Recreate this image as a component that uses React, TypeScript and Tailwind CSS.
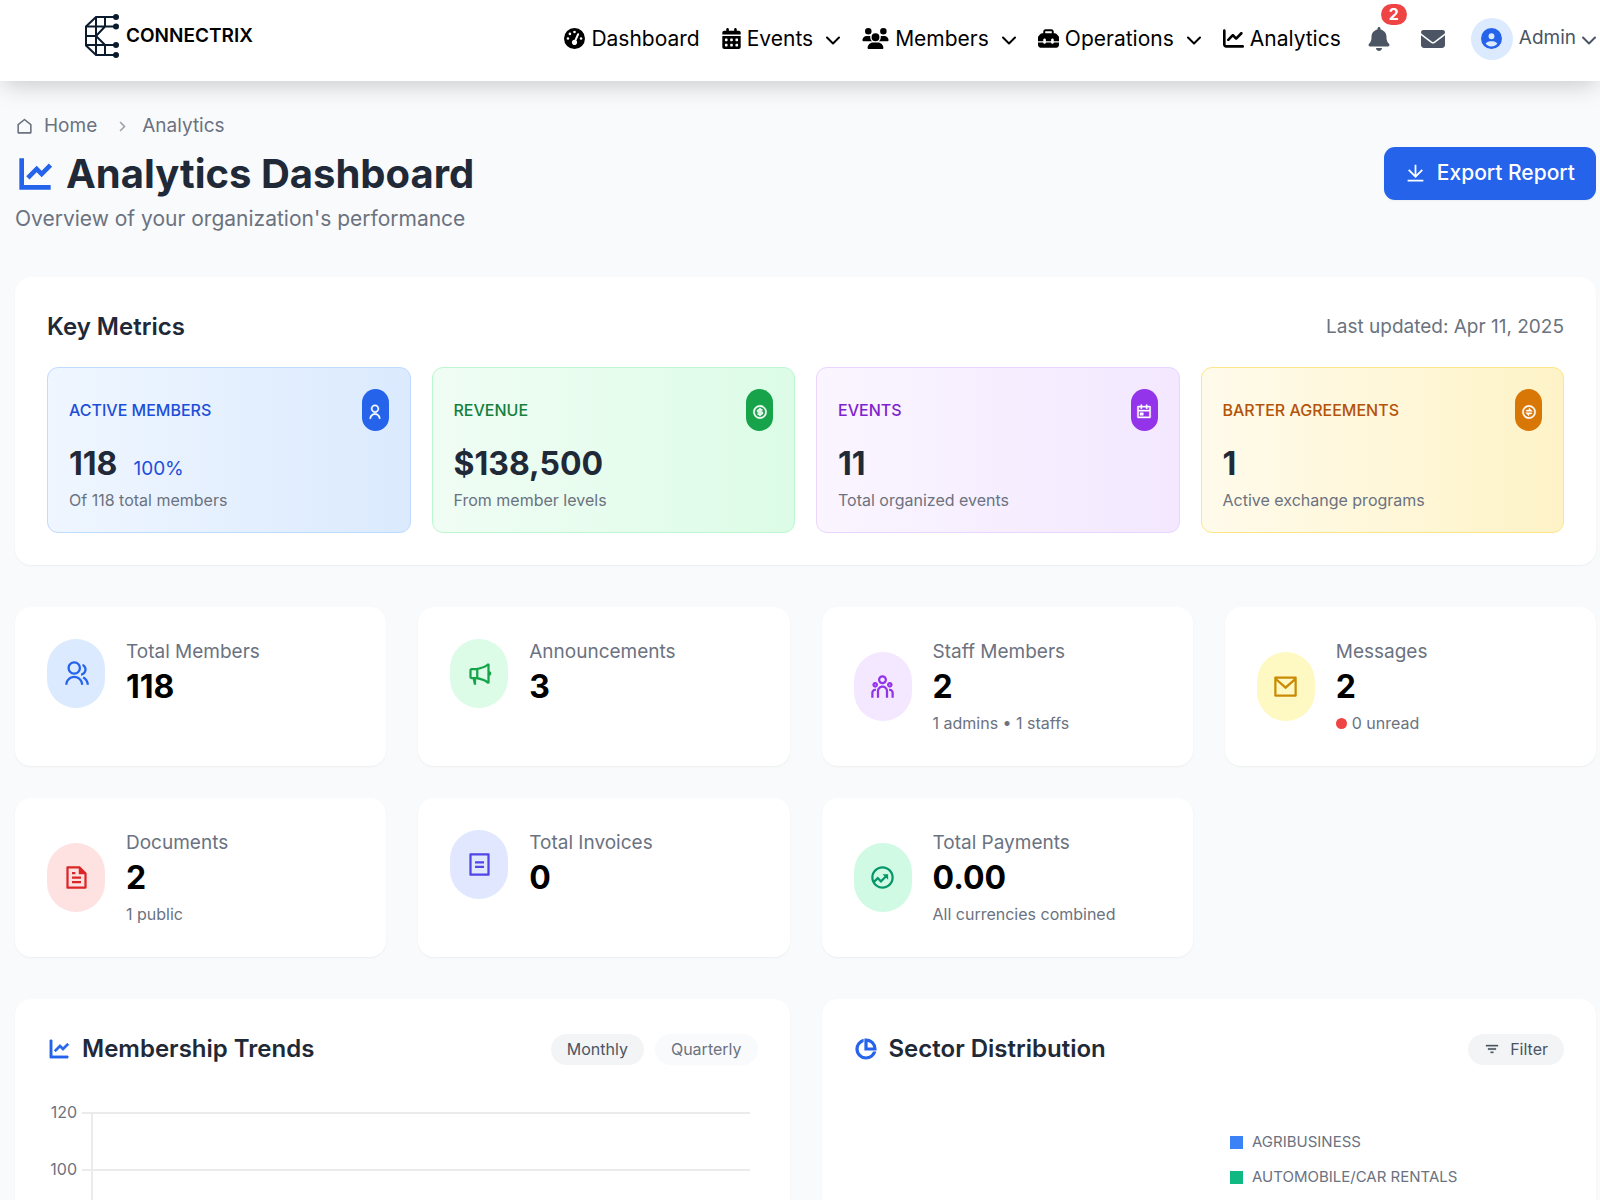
import { useState } from "react";
import type { IconType } from "react-icons";
import {
  FaBell,
  FaCalendarDays,
  FaChartLine,
  FaCircleUser,
  FaEnvelope,
  FaGaugeHigh,
  FaToolbox,
  FaUsers,
} from "react-icons/fa6";
import {
  RiArrowRightSLine,
  RiBillLine,
  RiCalendarEventLine,
  RiDownloadLine,
  RiExchangeLine,
  RiFileTextLine,
  RiFilter3Line,
  RiFundsLine,
  RiGroupLine,
  RiHomeLine,
  RiLineChartLine,
  RiMailLine,
  RiMegaphoneLine,
  RiMoneyDollarCircleLine,
  RiPieChartLine,
  RiTeamLine,
  RiUserLine,
} from "react-icons/ri";

type NavItem = { label: string; icon: IconType; size: string; menu?: boolean };

const navItems: NavItem[] = [
  { label: "Dashboard", icon: FaGaugeHigh, size: "w-[21px]" },
  { label: "Events", icon: FaCalendarDays, size: "w-[19px]", menu: true },
  { label: "Members", icon: FaUsers, size: "w-[27px]", menu: true },
  { label: "Operations", icon: FaToolbox, size: "w-[21px]", menu: true },
  { label: "Analytics", icon: FaChartLine, size: "w-[21px]" },
];

const metrics = [
  {
    label: "ACTIVE MEMBERS",
    value: "118",
    extra: "100%",
    note: "Of 118 total members",
    icon: RiUserLine,
    card: "from-[#eff6ff] to-[#dbeafe] border-[#bfdbfe]",
    text: "text-[#1d4ed8]",
    pill: "bg-[#2563eb]",
  },
  {
    label: "REVENUE",
    value: "$138,500",
    note: "From member levels",
    icon: RiMoneyDollarCircleLine,
    card: "from-[#f0fdf4] to-[#dcfce7] border-[#bbf7d0]",
    text: "text-[#15803d]",
    pill: "bg-[#16a34a]",
  },
  {
    label: "EVENTS",
    value: "11",
    note: "Total organized events",
    icon: RiCalendarEventLine,
    card: "from-[#faf5ff] to-[#f3e8ff] border-[#e9d5ff]",
    text: "text-[#7e22ce]",
    pill: "bg-[#9333ea]",
  },
  {
    label: "BARTER AGREEMENTS",
    value: "1",
    note: "Active exchange programs",
    icon: RiExchangeLine,
    card: "from-[#fffbeb] to-[#fef3c7] border-[#fde68a]",
    text: "text-[#b45309]",
    pill: "bg-[#d97706]",
  },
];

const stats = [
  { label: "Total Members", value: "118", icon: RiGroupLine, tone: "bg-[#dbeafe] text-[#2563eb]" },
  { label: "Announcements", value: "3", icon: RiMegaphoneLine, tone: "bg-[#dcfce7] text-[#16a34a]" },
  { label: "Staff Members", value: "2", note: "1 admins • 1 staffs", icon: RiTeamLine, tone: "bg-[#f3e8ff] text-[#9333ea]" },
  { label: "Messages", value: "2", note: "0 unread", dot: true, icon: RiMailLine, tone: "bg-[#fef9c3] text-[#ca8a04]" },
  { label: "Documents", value: "2", note: "1 public", icon: RiFileTextLine, tone: "bg-[#fee2e2] text-[#dc2626]" },
  { label: "Total Invoices", value: "0", icon: RiBillLine, tone: "bg-[#e0e7ff] text-[#4f46e5]" },
  { label: "Total Payments", value: "0.00", note: "All currencies combined", icon: RiFundsLine, tone: "bg-[#d1fae5] text-[#059669]" },
];

const sectors = [
  { name: "AGRIBUSINESS", color: "bg-[#3b82f6]" },
  { name: "AUTOMOBILE/CAR RENTALS", color: "bg-[#10b981]" },
];

const ticks = [120, 100];

const Chevron = () => (
  <svg width="14" height="9" viewBox="0 0 14 9" fill="none" stroke="currentColor" strokeWidth="2" strokeLinecap="round" strokeLinejoin="round" aria-hidden="true">
    <path d="M1 1.500l6 6 6-6" />
  </svg>
);

const Logo = () => (
  <svg width="36" height="46" viewBox="0 0 36 46" fill="none" stroke="#0b1b2e" strokeWidth="2" aria-hidden="true">
    <path d="M32 3H12L2 12.500v19L12 41H32" />
    <path d="M32 12.500H2M32 31H2M2 22h10M12 3v38M21 3v9.500L12 22l9 9v10" />
    <g fill="#0b1b2e" stroke="none">
      <circle cx="32" cy="3" r="3" />
      <circle cx="32" cy="12.500" r="3" />
      <circle cx="32" cy="31" r="3" />
      <circle cx="32" cy="41" r="3" />
    </g>
  </svg>
);

const Header = () => (
  <header className="relative z-10 flex h-[81px] shrink-0 items-center justify-between bg-white pr-1 pl-21 shadow-[0_8px_24px_-4px_rgba(0,0,0,0.2)]">
    <a href="#" className="flex items-center gap-1.5 pb-2">
      <Logo />
      <span className="text-[19px] font-semibold text-black">CONNECTRIX</span>
    </a>

    <div className="flex items-center pb-1">
      <nav className="flex items-center gap-[22px]">
        {navItems.map(({ label, icon: Icon, size, menu }) =>
          menu ? (
            <button key={label} className="flex items-center gap-1.5 text-[21px] text-black">
              <Icon className={size} />
              <span>{label}</span>
              <span className="ml-[7px] pt-1">
                <Chevron />
              </span>
            </button>
          ) : (
            <a key={label} href="#" className="flex items-center gap-1.5 text-[21px] text-black">
              <Icon className={size} />
              <span>{label}</span>
            </a>
          )
        )}
      </nav>

      <button aria-label="Notifications" className="relative ml-[26px] text-2xl text-[#4b5563]">
        <FaBell />
        <span className="absolute -top-[23px] left-[14px] flex h-[21px] w-[26px] items-center justify-center rounded-full bg-[#ef4444] text-base font-bold text-white">
          2
        </span>
      </button>
      <button aria-label="Messages" className="ml-[30px] text-2xl text-[#4b5563]">
        <FaEnvelope />
      </button>
      <button className="ml-[26px] flex items-center gap-1.5 text-[19px] text-[#4b5563]">
        <span className="flex h-[42px] w-[42px] items-center justify-center rounded-full bg-[#dbeafe] text-[21px] text-[#2563eb]">
          <FaCircleUser />
        </span>
        Admin
        <span className="pt-1">
          <Chevron />
        </span>
      </button>
    </div>
  </header>
);

const App = () => {
  const [period, setPeriod] = useState("Monthly");

  return (
    <div className="flex h-screen flex-col overflow-hidden bg-[#f9fafb] font-['Inter',sans-serif]">
      <Header />

      <main className="pt-[33px] pr-1 pl-[15px]">
        <nav aria-label="Breadcrumb" className="flex items-center text-[19px] leading-6 text-[#6b7280]">
          <a href="#" className="flex items-center gap-[10px]">
            <RiHomeLine />
            Home
          </a>
          <RiArrowRightSLine className="mr-2.5 ml-4 text-[#9ca3af]" />
          <span>Analytics</span>
        </nav>

        <div className="mt-2 flex items-center justify-between">
          <div>
            <h1 className="flex items-center gap-[11px] text-[40px] leading-[56px] font-bold text-[#1f2937]">
              <RiLineChartLine strokeWidth={0.8} className="text-[#2563eb]" />
              Analytics Dashboard
            </h1>
            <p className="pt-px text-[21px] leading-8 text-[#6b7280]">Overview of your organization&apos;s performance</p>
          </div>
          <button className="mb-[35px] flex h-[53px] items-center gap-[11px] rounded-[11px] bg-[#2563eb] px-[21px] text-[21px] font-medium text-white shadow-xs">
            <RiDownloadLine />
            Export Report
          </button>
        </div>

        <section className="mt-[42px] rounded-2xl bg-white p-8 shadow-xs">
          <div className="flex items-center justify-between">
            <h2 className="text-2xl leading-9 font-semibold text-[#1f2937]">Key Metrics</h2>
            <span className="text-[19px] text-[#6b7280]">Last updated: Apr 11, 2025</span>
          </div>
          <div className="mt-[22px] grid grid-cols-4 gap-[21px]">
            {metrics.map(({ label, value, extra, note, icon: Icon, card, text, pill }) => (
              <div key={label} className={`rounded-[11px] border bg-linear-to-r p-[21px] ${card}`}>
                <div className="flex items-center justify-between">
                  <h3 className={`text-base font-medium ${text}`}>{label}</h3>
                  <span className={`flex h-[42px] w-[27px] items-center justify-center rounded-full pt-1 text-base text-white ${pill}`}>
                    <Icon strokeWidth={0.6} />
                  </span>
                </div>
                <div className="mt-[11px] flex items-baseline gap-4">
                  <span className="text-[32px] leading-[43px] font-bold text-[#1f2937]">{value}</span>
                  {extra && <span className={`text-[19px] ${text}`}>{extra}</span>}
                </div>
                <p className="mt-[5px] text-base leading-[21px] text-[#6b7280]">{note}</p>
              </div>
            ))}
          </div>
        </section>

        <section className="mt-[42px] grid grid-cols-4 gap-8">
          {stats.map(({ label, value, note, dot, icon: Icon, tone }) => (
            <div key={label} className="h-[159px] rounded-2xl bg-white px-8 pt-[31px] shadow-xs">
              <div className="flex items-center gap-[21px]">
                <span className={`flex h-[69px] w-[58px] items-center justify-center rounded-full text-[27px] ${tone}`}>
                  <Icon />
                </span>
                <div>
                  <h3 className="text-[19px] leading-[27px] text-[#6b7280]">{label}</h3>
                  <p className="text-[32px] leading-[43px] font-bold text-black">{value}</p>
                  {note && (
                    <p className="mt-[5px] flex items-center text-base leading-[21px] text-[#6b7280]">
                      {dot && <span className="mr-[5px] h-[11px] w-[11px] rounded-full bg-[#ef4444]" />}
                      {note}
                    </p>
                  )}
                </div>
              </div>
            </div>
          ))}
        </section>

        <section className="mt-[42px] grid grid-cols-2 gap-8">
          <div className="rounded-2xl bg-white p-8 shadow-xs">
            <div className="flex items-center justify-between">
              <h2 className="flex items-center gap-[11px] text-2xl leading-9 font-semibold text-[#1f2937]">
                <RiLineChartLine strokeWidth={0.9} className="text-[#2563eb]" />
                Membership Trends
              </h2>
              <div className="flex gap-[11px]">
                {["Monthly", "Quarterly"].map((name) => (
                  <button
                    key={name}
                    onClick={() => setPeriod(name)}
                    className={`rounded-full px-4 py-[5px] text-base leading-[21px] ${
                      period === name ? "bg-[#f3f4f6] text-[#4b5563]" : "bg-[#f9fafb] text-[#6b7280]"
                    }`}
                  >
                    {name}
                  </button>
                ))}
              </div>
            </div>
            <svg className="mt-8 h-[400px] w-full" fontSize="16" fill="#6b7280" role="img" aria-label="Membership trends">
              {ticks.map((tick, i) => (
                <g key={tick}>
                  <text x="30" y={19 + i * 57} textAnchor="end">{tick}</text>
                  <rect x="35" y={13 + i * 57} width="94%" height="2" fill="#ebebeb" />
                </g>
              ))}
              <rect x="44" y="13" width="2" height="342" fill="#ebebeb" />
            </svg>
          </div>

          <div className="rounded-2xl bg-white p-8 shadow-xs">
            <div className="flex items-center justify-between">
              <h2 className="flex items-center gap-[11px] text-2xl leading-9 font-semibold text-[#1f2937]">
                <RiPieChartLine strokeWidth={1.2} className="text-[#2563eb]" />
                Sector Distribution
              </h2>
              <button className="flex items-center gap-[10px] rounded-full bg-[#f3f4f6] px-4 py-[5px] text-base leading-[21px] text-[#4b5563]">
                <RiFilter3Line strokeWidth={0.5} />
                Filter
              </button>
            </div>
            <ul className="mt-[58px] ml-auto w-[334px] text-[15px] text-[#6b7280]">
              {sectors.map(({ name, color }) => (
                <li key={name} className="flex h-[35px] items-center gap-[9px]">
                  <span className={`h-[13px] w-[13px] ${color}`} />
                  {name}
                </li>
              ))}
            </ul>
          </div>
        </section>
      </main>
    </div>
  );
};

export default App;
